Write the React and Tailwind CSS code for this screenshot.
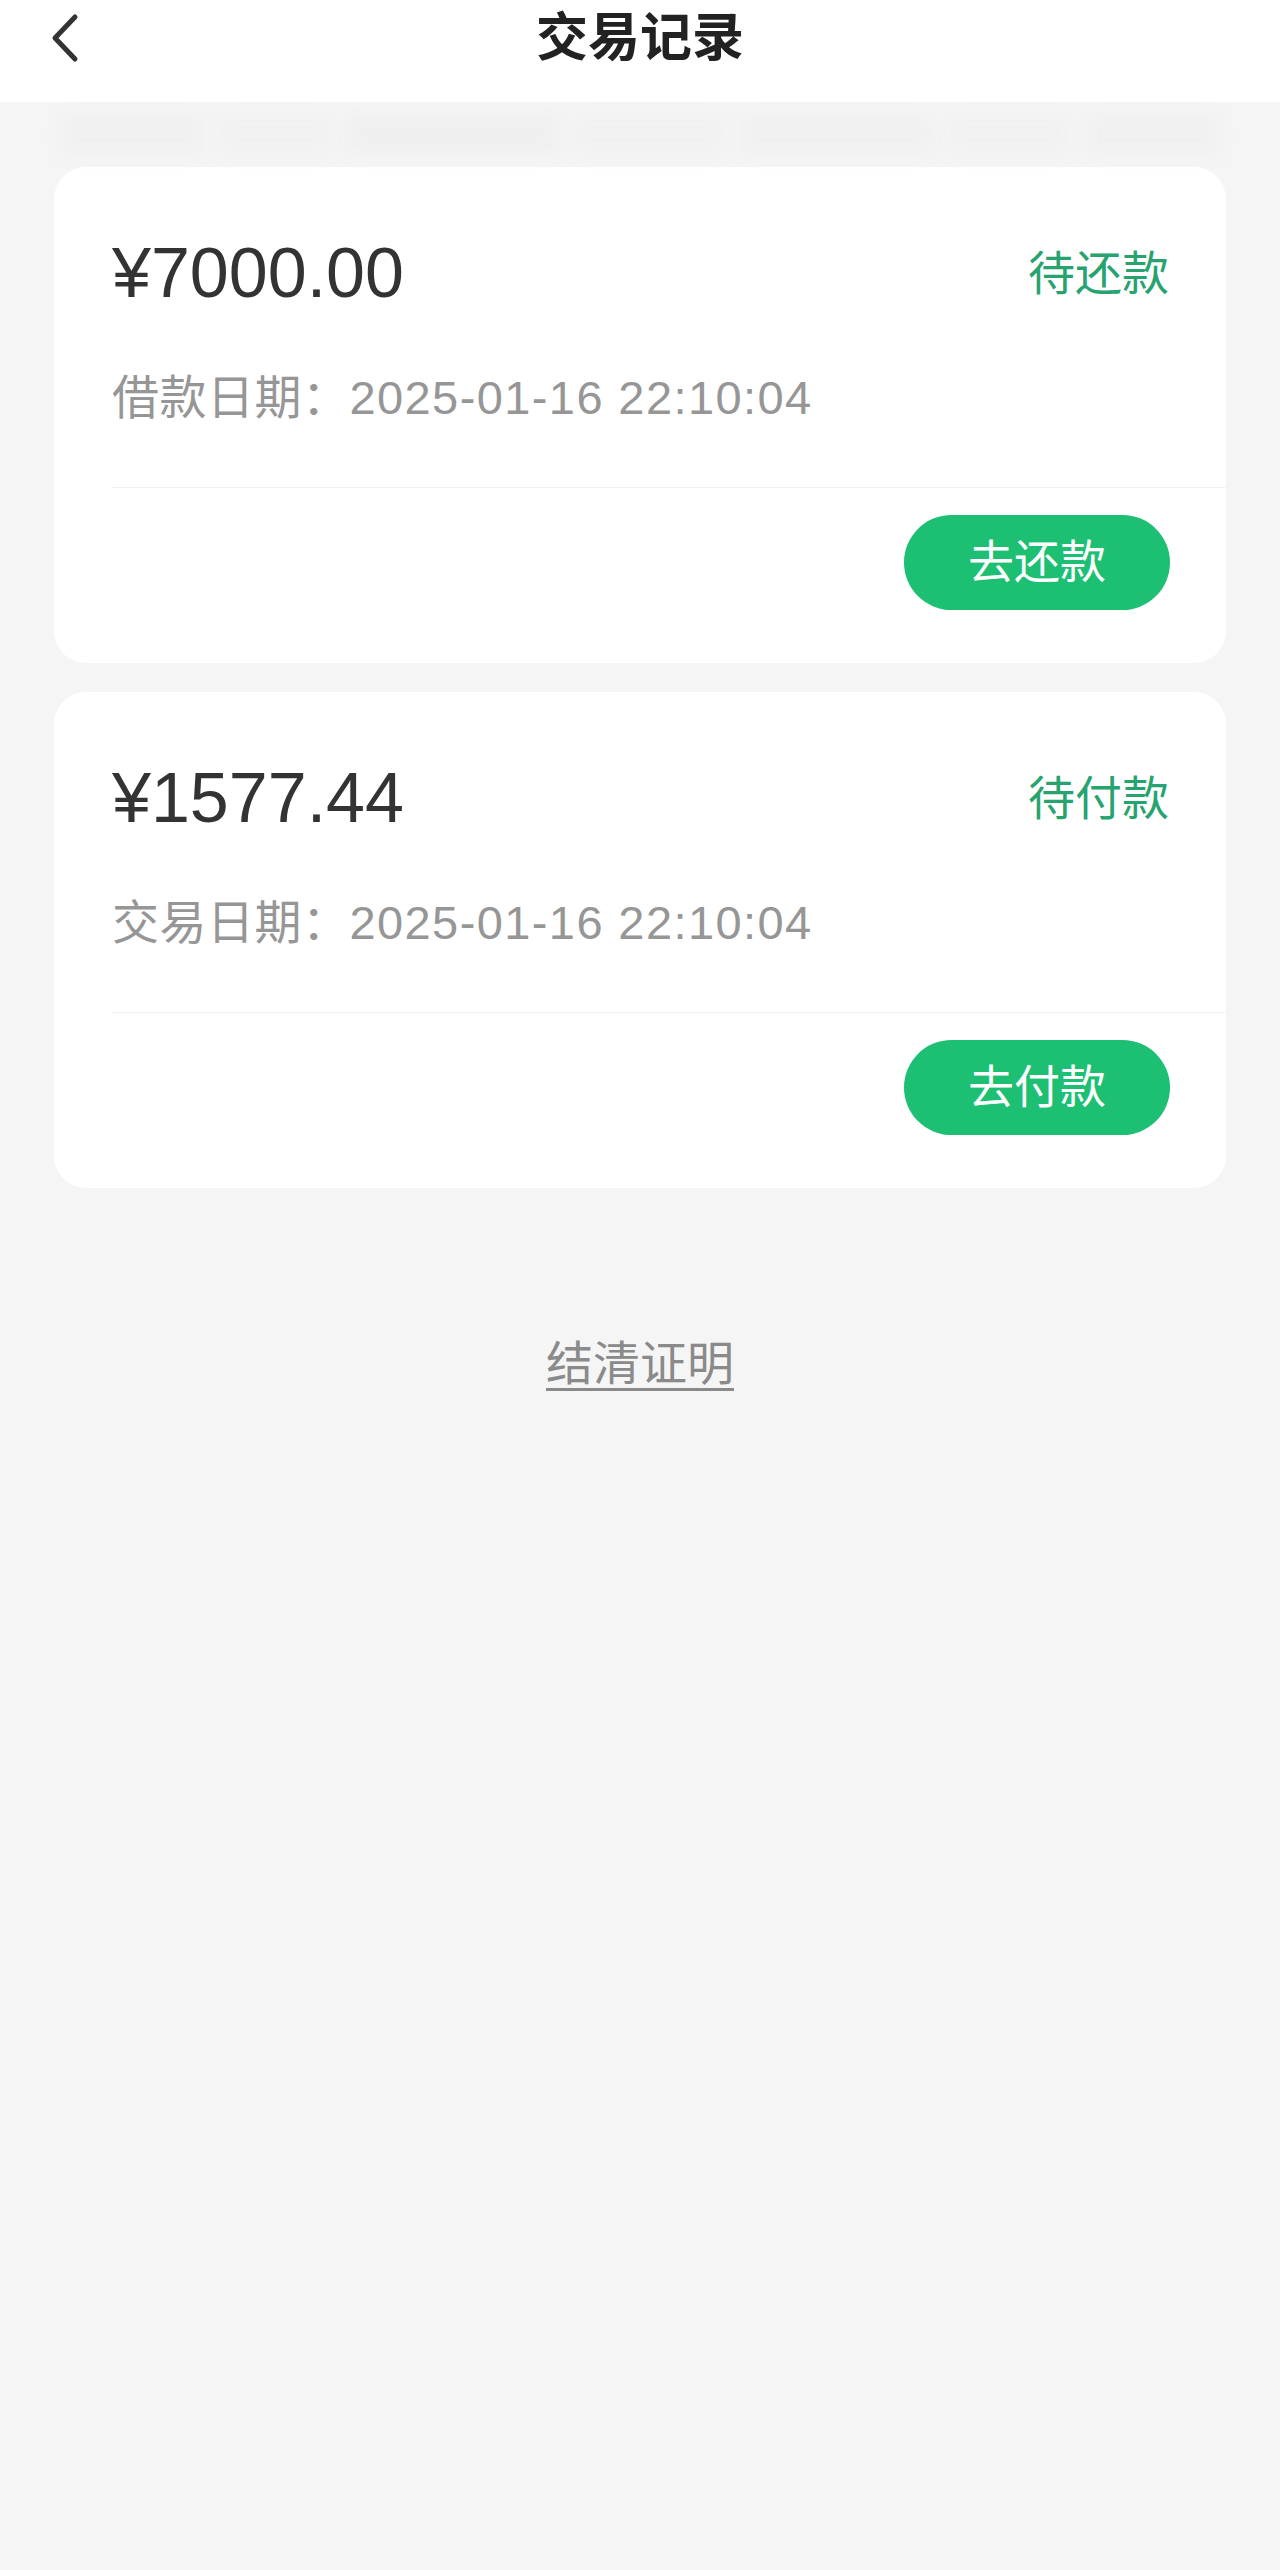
import React from 'react'

const FONT = { fontFamily: '"Liberation Sans", "Noto Sans CJK SC", sans-serif' }

const records = [
  { amount: '¥7000.00', status: '待还款', label: '借款日期：', date: '2025-01-16 22:10:04', action: '去还款' },
  { amount: '¥1577.44', status: '待付款', label: '交易日期：', date: '2025-01-16 22:10:04', action: '去付款' },
]

function RecordCard({ item }) {
  return (
    <div className="rounded-[32px] bg-white">
      <div className="pl-[58px] pr-[57px] pt-[71px]">
        <div className="flex items-center justify-between">
          <span className="text-[70px] leading-none text-[#333333]">{item.amount}</span>
          <span className="text-[47px] leading-none text-[#27a36f]">{item.status}</span>
        </div>
        <p className="mt-[66px] text-[47px] leading-none text-[#969696]">
          <span className="tracking-[0.5px]">{item.label}</span>
          <span className="tracking-[1.4px]">{item.date}</span>
        </p>
      </div>
      <div className="ml-[58px] mt-[66px] border-t border-[#f2f2f2]" />
      <div className="flex justify-end pb-[53px] pr-[56px] pt-[27px]">
        <button className="h-[95px] w-[266px] rounded-full bg-[#1dbf73] text-[46px] text-white">
          {item.action}
        </button>
      </div>
    </div>
  )
}

export default function App() {
  return (
    <div className="min-h-[2570px] bg-[#f5f5f5]" style={FONT}>
      <header className="relative flex h-[102px] items-center justify-center bg-white">
        <button className="absolute left-[50px] top-[13px] h-[50px] w-[30px]" aria-label="back">
          <svg viewBox="0 0 30 50" className="h-full w-full" fill="none" stroke="#333333" strokeWidth="5" strokeLinecap="round" strokeLinejoin="round">
            <path d="M25 4 L5 25 L25 46" />
          </svg>
        </button>
        <h1 className="-mt-[26px] text-[52px] font-bold text-[#222222]">交易记录</h1>
      </header>

      <div className="flex h-[64px] gap-[14px] px-[60px] pt-[12px] blur-[8px]">
        <div className="h-[40px] w-[150px] bg-[#f0f0f0]" />
        <div className="h-[40px] w-[120px] bg-[#f1f1f1]" />
        <div className="h-[40px] w-[220px] bg-[#efefef]" />
        <div className="h-[40px] w-[160px] bg-[#f1f1f1]" />
        <div className="h-[40px] w-[200px] bg-[#f0f0f0]" />
        <div className="h-[40px] w-[130px] bg-[#f1f1f1]" />
        <div className="h-[40px] w-[140px] bg-[#f0f0f0]" />
      </div>

      <main className="mx-[54px] flex flex-col gap-[29px] pt-[1px]">
        {records.map((item) => (
          <RecordCard key={item.status} item={item} />
        ))}
      </main>

      <div className="mt-[152px] flex justify-center">
        <span className="text-[47px] leading-none text-[#8a8a8a] underline decoration-[3px] underline-offset-[8px]">
          结清证明
        </span>
      </div>
    </div>
  )
}
